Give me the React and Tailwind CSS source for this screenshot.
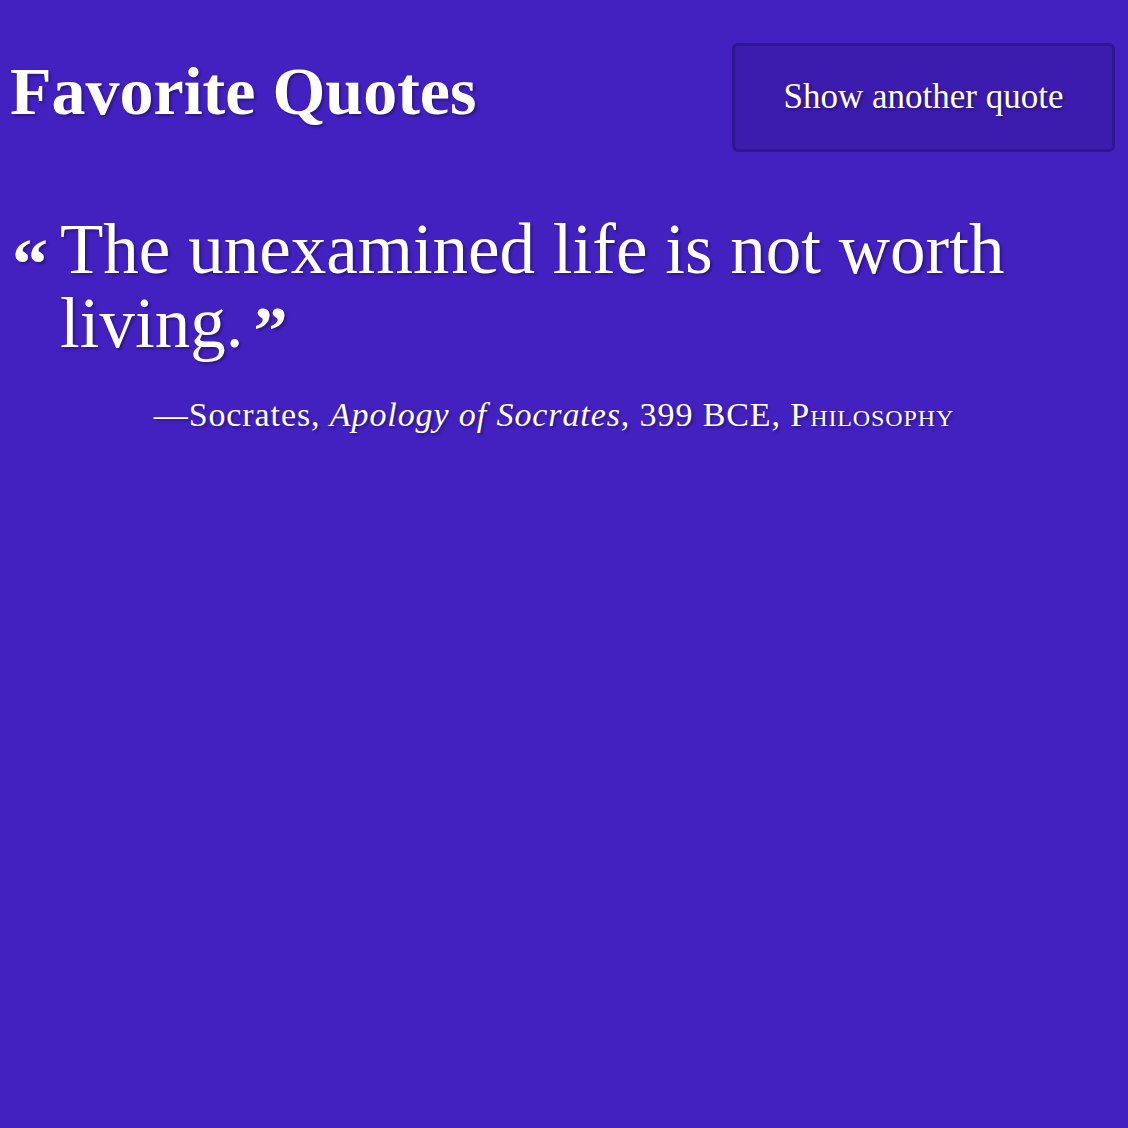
import React from "react";

const quote = {
  text: "The unexamined life is not worth living.",
  author: "Socrates",
  source: "Apology of Socrates",
  year: "399 BCE",
  tag: "Philosophy",
};

export default function App() {
  const shadow = "[text-shadow:2px_2px_3px_rgba(0,0,0,0.35)]";
  return (
    <div className="min-h-[1128px] w-full bg-[#4321c1] text-white font-['Liberation_Serif',serif] px-[10px]">
      <header className="flex items-center justify-between pt-[43px]">
        <h1 className={`text-[68px] font-bold leading-none -mt-[14px] ${shadow}`}>
          Favorite Quotes
        </h1>
        <button className="mr-[3px] w-[383px] h-[109px] rounded-[6px] border-[3px] border-[#2e168f] bg-[#3c1cae] text-[35px] text-white">
          <span className={shadow}>Show another quote</span>
        </button>
      </header>

      <blockquote className="mt-[60px] pl-[50px] pr-[20px]">
        <p className={`relative text-[71px] leading-[74px] ${shadow}`}>
          <span className="absolute -left-[48px] top-[16px] text-[72px] font-bold leading-none">
            “
          </span>
          {quote.text}
          <span className="ml-[10px] text-[68px] font-bold leading-none align-[-6px]">”</span>
        </p>
        <footer className={`mt-[31px] -ml-[50px] text-center text-[34px] leading-[40px] tracking-[0.9px] ${shadow}`}>
          —{quote.author}, <cite className="italic">{quote.source}</cite>, {quote.year},{" "}
          <span className="[font-variant-caps:small-caps]">{quote.tag}</span>
        </footer>
      </blockquote>
    </div>
  );
}
